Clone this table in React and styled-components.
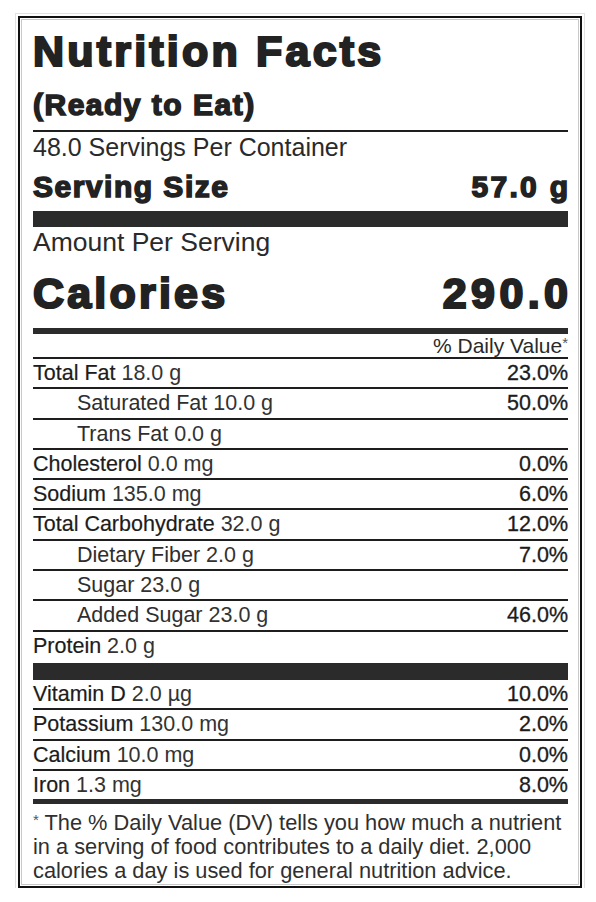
import React from "react";
import styled, { createGlobalStyle } from "styled-components";

const GlobalStyle = createGlobalStyle`
  html, body {
    margin: 0;
    padding: 0;
    background: #ffffff;
  }
  body {
    font-family: "Liberation Sans", Arial, sans-serif;
    color: #222;
  }
`;

const Page = styled.div`
  padding: 16px 0 0 18px;
`;

const Label = styled.section`
  box-sizing: border-box;
  width: 564px;
  border: 2px solid #111;
  padding: 8px 12px 3px 13px;
  box-shadow: inset 0 0 0 1px #fff, inset 0 0 0 2px #c8c8c8, 0 0 0 2px #fff,
    0 0 0 3px #e2e2e2;
  background: #fff;
`;

const Heavy = styled.div`
  font-weight: 700;
  color: #222;
  font-size: ${(p) => p.$size}px;
  line-height: ${(p) => p.$line}px;
  letter-spacing: ${(p) => p.$spacing}px;
  -webkit-text-stroke: ${(p) => p.$stroke}px #222;
  white-space: nowrap;
`;

const Title = styled(Heavy)``;

const Subtitle = styled(Heavy)`
  margin-top: 11px;
  padding-bottom: 7px;
  border-bottom: 2px solid #1e1e1e;
`;

const Plain = styled.div`
  font-size: ${(p) => p.$size}px;
  line-height: ${(p) => p.$line}px;
  margin-top: ${(p) => p.$gap}px;
  color: #2a2a2a;
  white-space: nowrap;
`;

const SplitRow = styled.div`
  display: flex;
  justify-content: space-between;
  align-items: baseline;
  margin-top: ${(p) => p.$gap}px;
`;

const Tail = styled.span`
  margin-right: ${(p) => -p.$spacing}px;
`;

const Rule = styled.div`
  height: ${(p) => p.$height}px;
  margin-top: ${(p) => p.$gap || 0}px;
  background: #2b2b2b;
`;

const DailyHeader = styled.div`
  height: 23px;
  line-height: 23px;
  font-size: 21px;
  text-align: right;
  color: #2a2a2a;
  border-bottom: 2px solid #1e1e1e;
`;

const Star = styled.sup`
  font-size: 15px;
  vertical-align: 5px;
  line-height: 0;
  color: #555;
`;

const NutrientRow = styled.div`
  display: flex;
  justify-content: space-between;
  height: ${(p) => p.$height || 28.3}px;
  line-height: 28.3px;
  font-size: 21.5px;
  padding-left: ${(p) => (p.$sub ? 44 : 0)}px;
  border-bottom: ${(p) => (p.$ruled ? "2px solid #1e1e1e" : "none")};
  white-space: nowrap;
`;

const NutrientName = styled.span`
  color: ${(p) => (p.$sub ? "#2e2e2e" : "#1c1c1c")};
  -webkit-text-stroke: ${(p) => (p.$sub ? 0 : 0.2)}px #1c1c1c;
`;

const Amount = styled.span`
  color: #333;
`;

const Percent = styled.span`
  color: #1c1c1c;
  -webkit-text-stroke: 0.3px #1c1c1c;
`;

const Footnote = styled.p`
  margin: 7px 0 0;
  font-size: 21.8px;
  line-height: 23.8px;
  color: #2f2f2f;
  white-space: nowrap;
`;

const nutrients = [
  { name: "Total Fat", amount: "18.0 g", dv: "23.0%" },
  { name: "Saturated Fat", amount: "10.0 g", dv: "50.0%", sub: true },
  { name: "Trans Fat", amount: "0.0 g", sub: true },
  { name: "Cholesterol", amount: "0.0 mg", dv: "0.0%" },
  { name: "Sodium", amount: "135.0 mg", dv: "6.0%" },
  { name: "Total Carbohydrate", amount: "32.0 g", dv: "12.0%" },
  { name: "Dietary Fiber", amount: "2.0 g", dv: "7.0%", sub: true },
  { name: "Sugar", amount: "23.0 g", sub: true },
  { name: "Added Sugar", amount: "23.0 g", dv: "46.0%", sub: true },
];

const minerals = [
  { name: "Vitamin D", amount: "2.0 µg", dv: "10.0%" },
  { name: "Potassium", amount: "130.0 mg", dv: "2.0%" },
  { name: "Calcium", amount: "10.0 mg", dv: "0.0%" },
  { name: "Iron", amount: "1.3 mg", dv: "8.0%" },
];

const Nutrient = ({ item, ruled = true, height }) => (
  <NutrientRow $sub={item.sub} $ruled={ruled} $height={height}>
    <span>
      <NutrientName $sub={item.sub}>{item.name}</NutrientName>{" "}
      <Amount>{item.amount}</Amount>
    </span>
    {item.dv && <Percent>{item.dv}</Percent>}
  </NutrientRow>
);

export default function App() {
  return (
    <>
      <GlobalStyle />
      <Page>
        <Label>
          <Title $size={43} $line={50} $spacing={3.2} $stroke={2.2}>
            Nutrition Facts
          </Title>
          <Subtitle $size={30} $line={36} $spacing={1.5} $stroke={1.5}>
            (Ready to Eat)
          </Subtitle>
          <Plain $size={25} $line={26} $gap={2}>
            48.0 Servings Per Container
          </Plain>
          <SplitRow $gap={9}>
            <Heavy $size={30} $line={36} $spacing={1.5} $stroke={1.5}>
              Serving Size
            </Heavy>
            <Heavy $size={30} $line={36} $spacing={2.3} $stroke={1.5}>
              <Tail $spacing={2.3}>57.0 g</Tail>
            </Heavy>
          </SplitRow>
          <Rule $height={16} $gap={6} />
          <Plain $size={26.5} $line={26} $gap={2}>
            Amount Per Serving
          </Plain>
          <SplitRow $gap={14}>
            <Heavy $size={43} $line={48} $spacing={3.2} $stroke={2.2}>
              Calories
            </Heavy>
            <Heavy $size={43} $line={48} $spacing={4.4} $stroke={2.2}>
              <Tail $spacing={4.4}>290.0</Tail>
            </Heavy>
          </SplitRow>
          <Rule $height={6} $gap={11} />
          <DailyHeader>
            % Daily Value<Star>*</Star>
          </DailyHeader>
          {nutrients.map((item) => (
            <Nutrient key={item.name} item={item} />
          ))}
          <Nutrient item={{ name: "Protein", amount: "2.0 g" }} ruled={false} height={29.3} />
          <Rule $height={17} $gap={2} />
          {minerals.map((item, i) => (
            <Nutrient key={item.name} item={item} ruled={i < minerals.length - 1} />
          ))}
          <Rule $height={5} />
          <Footnote>
            <Star>*</Star> The % Daily Value (DV) tells you how much a nutrient
            <br />
            in a serving of food contributes to a daily diet. 2,000
            <br />
            calories a day is used for general nutrition advice.
          </Footnote>
        </Label>
      </Page>
    </>
  );
}
